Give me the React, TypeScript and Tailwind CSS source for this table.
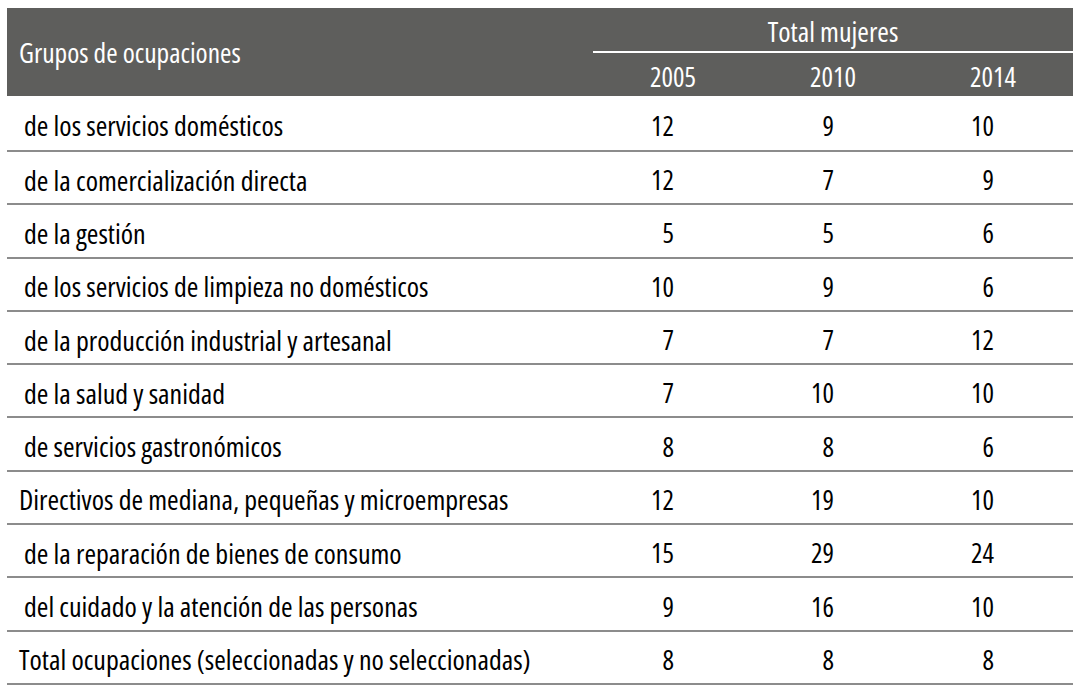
type Row = {
  label: string;
  indent: boolean;
  values: [number, number, number];
};

const rows: Row[] = [
  { label: 'de los servicios domésticos', indent: true, values: [12, 9, 10] },
  { label: 'de la comercialización directa', indent: true, values: [12, 7, 9] },
  { label: 'de la gestión', indent: true, values: [5, 5, 6] },
  { label: 'de los servicios de limpieza no domésticos', indent: true, values: [10, 9, 6] },
  { label: 'de la producción industrial y artesanal', indent: true, values: [7, 7, 12] },
  { label: 'de la salud y sanidad', indent: true, values: [7, 10, 10] },
  { label: 'de servicios gastronómicos', indent: true, values: [8, 8, 6] },
  { label: 'Directivos de mediana, pequeñas y microempresas', indent: false, values: [12, 19, 10] },
  { label: 'de la reparación de bienes de consumo', indent: true, values: [15, 29, 24] },
  { label: 'del cuidado y la atención de las personas', indent: true, values: [9, 16, 10] },
  { label: 'Total ocupaciones (seleccionadas y no seleccionadas)', indent: false, values: [8, 8, 8] },
];

const years = ['2005', '2010', '2014'];

export default function App() {
  return (
    <div className="min-h-screen bg-white pt-[8px] pl-[7px] font-['Open_Sans',sans-serif] [font-stretch:75%] text-[28px] leading-none text-black">
      <div className="w-[1066px]">
        {/* Header */}
        <div className="flex h-[88px] bg-[#5e5e5c] text-white">
          <div className="flex w-[586px] items-center pl-[12px] pt-[2px] text-[27.5px]">
            Grupos de ocupaciones
          </div>
          <div className="flex flex-1 flex-col">
            <div className="flex h-[43px] items-center justify-center pt-[2px]">
              Total mujeres
            </div>
            <div className="h-[2px] bg-white" />
            <div className="grid h-[43px] grid-cols-3 items-center pt-[4px] text-center text-[27px]">
              {years.map((y) => (
                <span key={y}>{y}</span>
              ))}
            </div>
          </div>
        </div>

        {/* Body */}
        {rows.map((row, i) => (
          <div
            key={row.label}
            className={`flex items-center border-b-2 border-[#8c8c8c] pt-[4px] ${
              i === 0 ? 'h-[56px]' : 'h-[53.3px]'
            }`}
          >
            <div className={`w-[586px] ${row.indent ? 'pl-[17px]' : 'pl-[12px]'}`}>
              {row.label}
            </div>
            <div className="grid flex-1 grid-cols-3 text-[27px]">
              {row.values.map((v, j) => (
                <span key={j} className="pr-[79px] text-right">
                  {v}
                </span>
              ))}
            </div>
          </div>
        ))}
      </div>
    </div>
  );
}
